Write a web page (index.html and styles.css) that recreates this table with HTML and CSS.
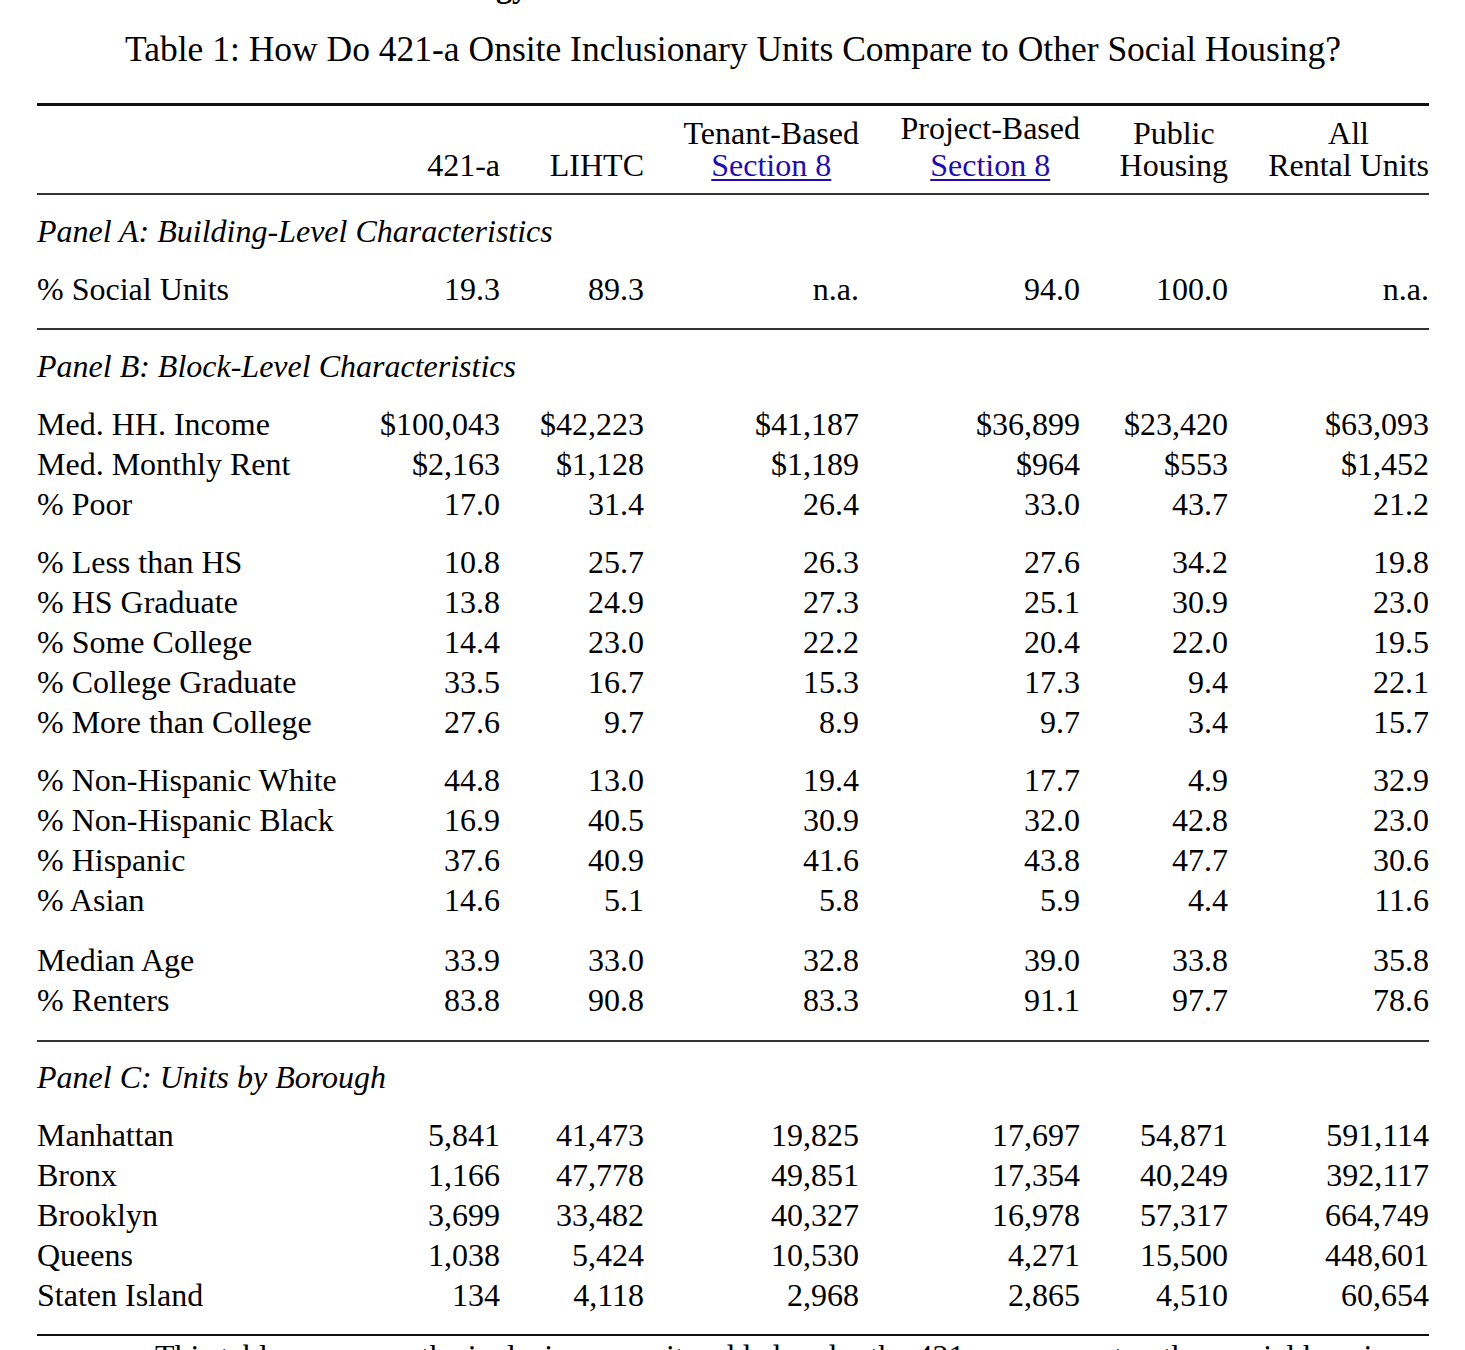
FILE: index.html
```html
<!DOCTYPE html>
<html lang="en">
<head>
<meta charset="utf-8">
<title>Table 1</title>
<link rel="stylesheet" href="styles.css">
</head>
<body>
<div class="page">
  <div class="prev-heading">2&nbsp;&nbsp;&nbsp;Data and Methodology</div>
  <div class="caption">Table 1: How Do 421-a Onsite Inclusionary Units Compare to Other Social Housing?</div>

  <div class="table">
    <div class="rule thick"></div>
    <div class="row head">
      <div></div>
      <div class="hc"><div class="hl">421-a</div></div>
      <div class="hc"><div class="hl">LIHTC</div></div>
      <div class="hc"><div class="hl"><span>Tenant-Based</span><a href="#">Section 8</a></div></div>
      <div class="hc"><div class="hl"><span class="raised">Project-Based</span><a href="#">Section 8</a></div></div>
      <div class="hc"><div class="hl"><span>Public</span><span>Housing</span></div></div>
      <div class="hc"><div class="hl"><span>All</span><span>Rental Units</span></div></div>
    </div>
    <div class="rule thin"></div>

    <div class="panel-title">Panel A: Building-Level Characteristics</div>
    <div class="group">
      <div class="row"><div class="lab">% Social Units</div><div>19.3</div><div>89.3</div><div>n.a.</div><div>94.0</div><div>100.0</div><div>n.a.</div></div>
    </div>
    <div class="rule thin"></div>

    <div class="panel-title">Panel B: Block-Level Characteristics</div>
    <div class="group">
      <div class="row"><div class="lab">Med. HH. Income</div><div>$100,043</div><div>$42,223</div><div>$41,187</div><div>$36,899</div><div>$23,420</div><div>$63,093</div></div>
      <div class="row"><div class="lab">Med. Monthly Rent</div><div>$2,163</div><div>$1,128</div><div>$1,189</div><div>$964</div><div>$553</div><div>$1,452</div></div>
      <div class="row"><div class="lab">% Poor</div><div>17.0</div><div>31.4</div><div>26.4</div><div>33.0</div><div>43.7</div><div>21.2</div></div>
    </div>
    <div class="group">
      <div class="row"><div class="lab">% Less than HS</div><div>10.8</div><div>25.7</div><div>26.3</div><div>27.6</div><div>34.2</div><div>19.8</div></div>
      <div class="row"><div class="lab">% HS Graduate</div><div>13.8</div><div>24.9</div><div>27.3</div><div>25.1</div><div>30.9</div><div>23.0</div></div>
      <div class="row"><div class="lab">% Some College</div><div>14.4</div><div>23.0</div><div>22.2</div><div>20.4</div><div>22.0</div><div>19.5</div></div>
      <div class="row"><div class="lab">% College Graduate</div><div>33.5</div><div>16.7</div><div>15.3</div><div>17.3</div><div>9.4</div><div>22.1</div></div>
      <div class="row"><div class="lab">% More than College</div><div>27.6</div><div>9.7</div><div>8.9</div><div>9.7</div><div>3.4</div><div>15.7</div></div>
    </div>
    <div class="group">
      <div class="row"><div class="lab">% Non-Hispanic White</div><div>44.8</div><div>13.0</div><div>19.4</div><div>17.7</div><div>4.9</div><div>32.9</div></div>
      <div class="row"><div class="lab">% Non-Hispanic Black</div><div>16.9</div><div>40.5</div><div>30.9</div><div>32.0</div><div>42.8</div><div>23.0</div></div>
      <div class="row"><div class="lab">% Hispanic</div><div>37.6</div><div>40.9</div><div>41.6</div><div>43.8</div><div>47.7</div><div>30.6</div></div>
      <div class="row"><div class="lab">% Asian</div><div>14.6</div><div>5.1</div><div>5.8</div><div>5.9</div><div>4.4</div><div>11.6</div></div>
    </div>
    <div class="group wide">
      <div class="row"><div class="lab">Median Age</div><div>33.9</div><div>33.0</div><div>32.8</div><div>39.0</div><div>33.8</div><div>35.8</div></div>
      <div class="row"><div class="lab">% Renters</div><div>83.8</div><div>90.8</div><div>83.3</div><div>91.1</div><div>97.7</div><div>78.6</div></div>
    </div>
    <div class="rule thin"></div>

    <div class="panel-title tight">Panel C: Units by Borough</div>
    <div class="group">
      <div class="row"><div class="lab">Manhattan</div><div>5,841</div><div>41,473</div><div>19,825</div><div>17,697</div><div>54,871</div><div>591,114</div></div>
      <div class="row"><div class="lab">Bronx</div><div>1,166</div><div>47,778</div><div>49,851</div><div>17,354</div><div>40,249</div><div>392,117</div></div>
      <div class="row"><div class="lab">Brooklyn</div><div>3,699</div><div>33,482</div><div>40,327</div><div>16,978</div><div>57,317</div><div>664,749</div></div>
      <div class="row"><div class="lab">Queens</div><div>1,038</div><div>5,424</div><div>10,530</div><div>4,271</div><div>15,500</div><div>448,601</div></div>
      <div class="row"><div class="lab">Staten Island</div><div>134</div><div>4,118</div><div>2,968</div><div>2,865</div><div>4,510</div><div>60,654</div></div>
    </div>
    <div class="rule thick"></div>
  </div>

  <p class="note">This table compares the inclusionary units added under the 421-a program to other social housing units in New York City.</p>
</div>
</body>
</html>
```

FILE: styles.css
```css
html, body {
  margin: 0;
  padding: 0;
  background: #ffffff;
}

body {
  font-family: "Liberation Serif", "Times New Roman", serif;
  font-size: 32px;
  color: #000000;
  overflow: hidden;
}

.page {
  width: 1392px;
  padding: 0 36px 0 37px;
  height: 1350px;
  overflow: hidden;
}

.prev-heading {
  font-weight: bold;
  line-height: 40px;
  height: 40px;
  margin-top: -34px;
  padding-left: 138px;
}

.caption {
  text-align: center;
  font-size: 35.5px;
  line-height: 40px;
  margin-top: 23px;
  margin-bottom: 34px;
  padding-left: 0;
  white-space: nowrap;
}

.rule {
  width: 100%;
}

.rule.thick {
  height: 2.5px;
  background: #111111;
}

.rule.thin {
  height: 2px;
  background: #333333;
}

.row {
  display: grid;
  grid-template-columns: 343px 120px 144px 215px 221px 148px 201px;
  line-height: 40px;
  height: 40px;
}

.row > div {
  text-align: right;
  white-space: nowrap;
}

.row > div.lab {
  text-align: left;
}

.row.head {
  height: auto;
  line-height: 32px;
  padding: 11px 0 12px;
  align-items: end;
}

.hc {
  display: flex;
  justify-content: flex-end;
  align-items: flex-end;
}

.hl {
  display: flex;
  flex-direction: column;
  align-items: center;
  text-align: center;
}

.hl .raised {
  margin-bottom: 5px;
  margin-top: -5px;
}

.hl a {
  color: #1f0db0;
  text-decoration: underline;
  text-decoration-thickness: 2px;
  text-underline-offset: 3px;
}

.panel-title {
  font-style: italic;
  line-height: 40px;
  padding-top: 16px;
}

.panel-title.tight {
  padding-top: 15px;
}

.group {
  padding-top: 18px;
}

.group.wide {
  padding-top: 20px;
}

.group + .rule {
  margin-top: 19px;
}

.group.wide + .rule {
  margin-top: 20px;
}

.note {
  margin: 0;
  padding-top: 0;
  text-indent: 118px;
  line-height: 40px;
}
```
